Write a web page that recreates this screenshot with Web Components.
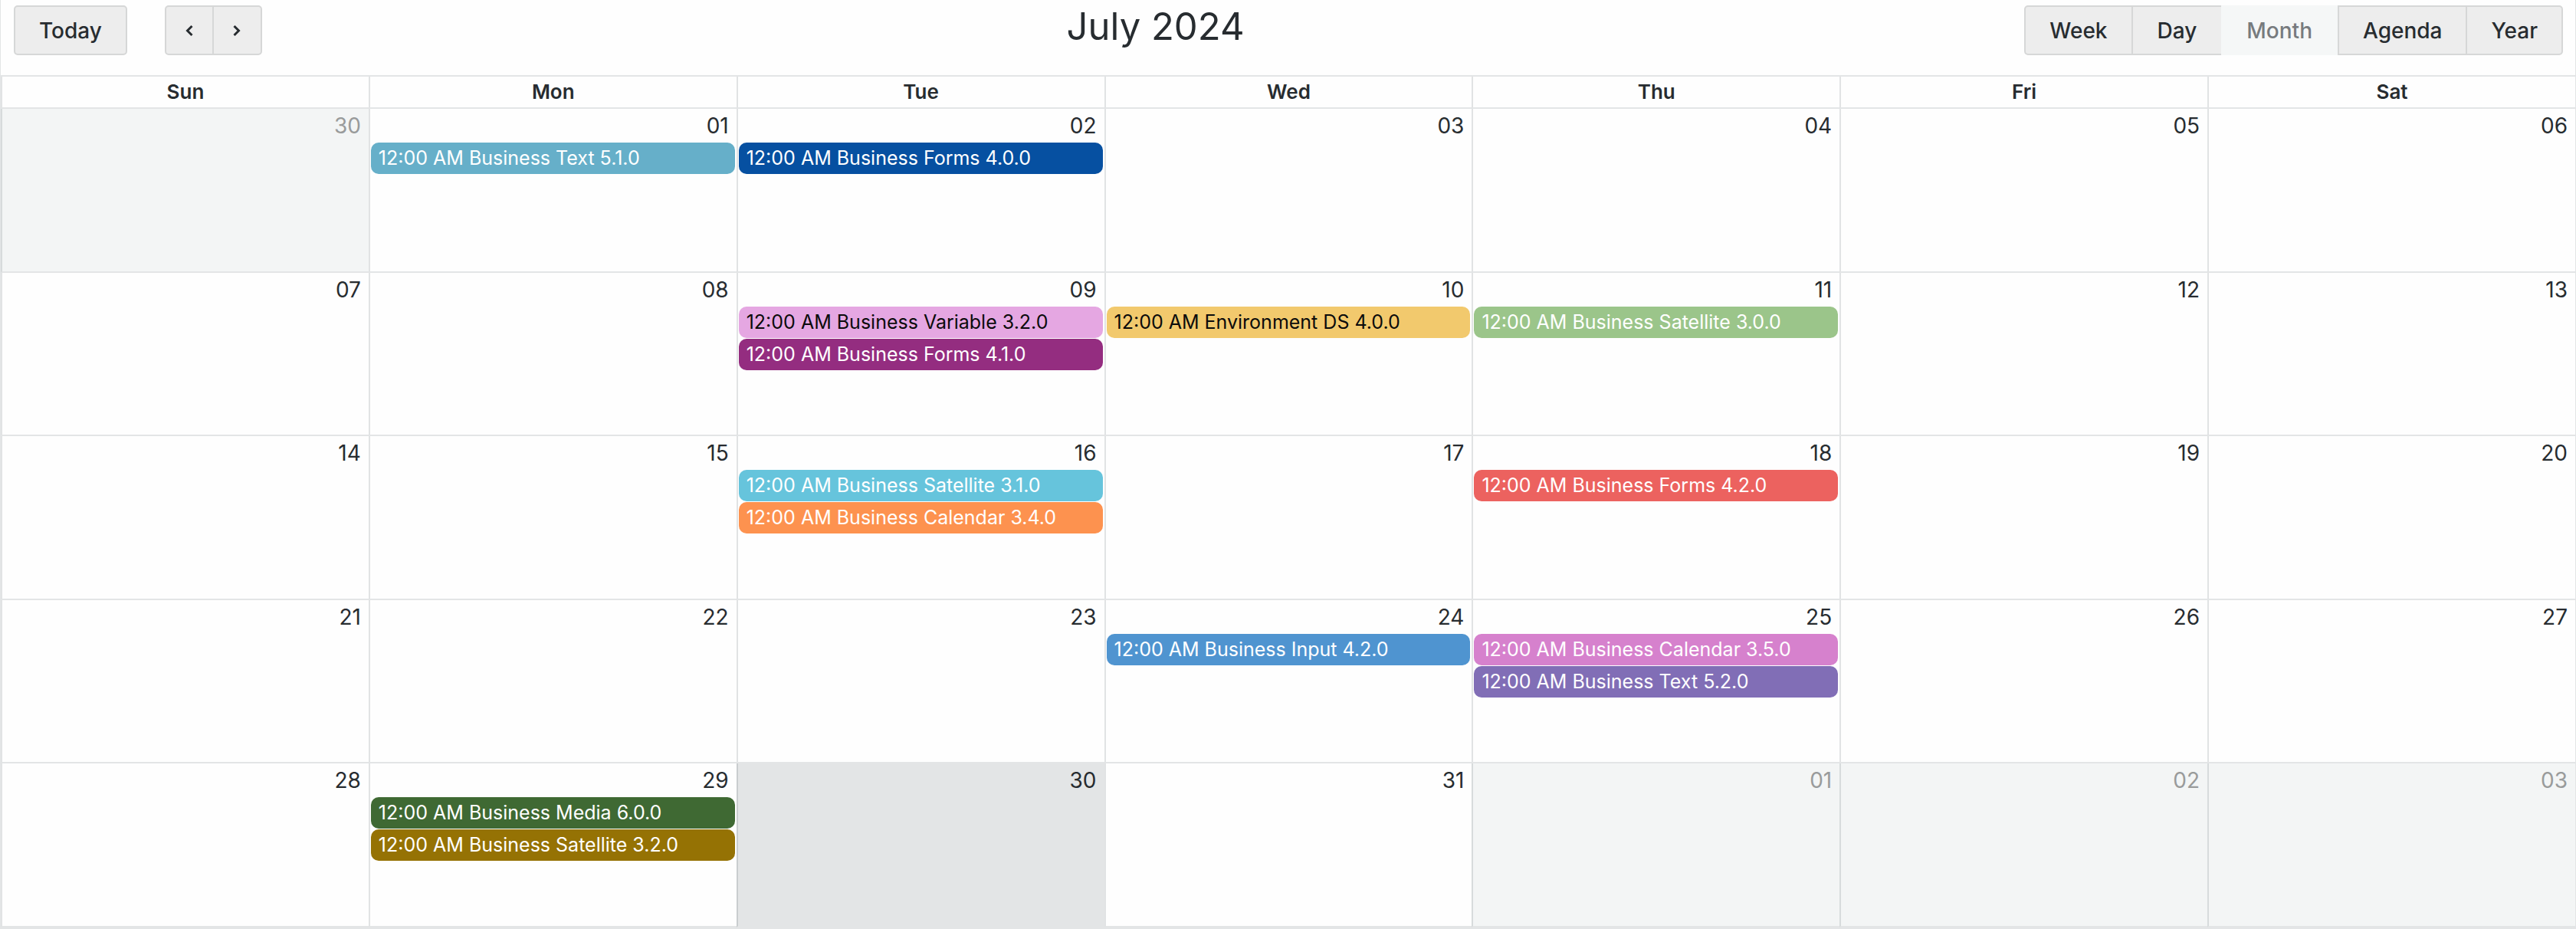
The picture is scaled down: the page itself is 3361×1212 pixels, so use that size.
<!DOCTYPE html>
<html lang="en">
<head>
<meta charset="utf-8">
<title>Calendar</title>
<style>
  body { margin: 0; background: #fefefe; color: #272c30; font-family: Inter, "Liberation Sans", sans-serif; font-size: 28px; }
</style>
</head>
<body>
<release-calendar></release-calendar>

<script>
const define = (name, html, setup) => {
  const template = document.createElement('template');
  template.innerHTML = html;
  customElements.define(name, class extends HTMLElement {
    connectedCallback() {
      if (this.shadowRoot) return;
      this.attachShadow({ mode: 'open' }).append(template.content.cloneNode(true));
      if (setup) setup(this, this.shadowRoot);
    }
  });
};

define('cal-button', `
  <style>
    :host { display: block; }
    button {
      display: flex; align-items: center; justify-content: center;
      box-sizing: border-box; height: 65px; width: 100%; margin: 0; padding: 0 31px;
      font: inherit; font-weight: 500; line-height: 34px; color: inherit;
      background: #ededed; border: 2px solid #d6d7d7;
      border-radius: var(--corners, 5px); cursor: pointer;
    }
    :host([joined]) button { border-left-width: 0; }
    :host([icon]) button { padding: 0; width: 64px; }
    :host([icon][joined]) button { width: 63px; }
    :host([active]) button { background: #f5f7f7; border-color: #f5f7f7; color: #777b7e; }
    :host([before-active]) button { border-right-width: 0; padding: 0 32px; }
  </style>
  <button type="button"><slot></slot></button>`, (host, root) => {
    const button = root.querySelector('button');
    if (host.hasAttribute('label')) button.setAttribute('aria-label', host.getAttribute('label'));
    if (host.hasAttribute('active')) button.setAttribute('aria-pressed', 'true');
  });

define('cal-button-group', `
  <style>
    :host { display: flex; }
    ::slotted(*) { --corners: 0; }
    ::slotted(:first-child) { --corners: 5px 0 0 5px; }
    ::slotted(:last-child) { --corners: 0 5px 5px 0; }
  </style>
  <slot></slot>`);

define('cal-toolbar', `
  <style>
    :host { display: flex; justify-content: space-between; align-items: flex-start; padding: 7px 16px 26px 17px; }
    .navigation { display: flex; gap: 49px; padding-right: 32px; }
    h1 { margin: 0; font-size: 49px; line-height: 56px; font-weight: 400; }
    svg { display: block; }
  </style>
  <div class="navigation">
    <cal-button>Today</cal-button>
    <cal-button-group>
      <cal-button icon label="Previous month">
        <svg width="10" height="16" viewBox="0 0 10 16" fill="none" stroke="#272c30" stroke-width="3"><path d="M8.5 2 2.5 8l6 6"/></svg>
      </cal-button>
      <cal-button icon joined label="Next month">
        <svg width="10" height="16" viewBox="0 0 10 16" fill="none" stroke="#272c30" stroke-width="3"><path d="m1.5 2 6 6-6 6"/></svg>
      </cal-button>
    </cal-button-group>
  </div>
  <h1><slot></slot></h1>
  <cal-button-group>
    <cal-button>Week</cal-button>
    <cal-button joined before-active>Day</cal-button>
    <cal-button active>Month</cal-button>
    <cal-button>Agenda</cal-button>
    <cal-button joined>Year</cal-button>
  </cal-button-group>`);

define('cal-event', `
  <style>
    :host {
      display: block; box-sizing: border-box; height: 41px; padding: 0 10px;
      font-size: 25px; line-height: 41px; white-space: nowrap; overflow: hidden; text-overflow: ellipsis;
      color: #fff; border-radius: 10px;
    }
    :host([dark-text]) { color: #0b0b0b; }
  </style>
  <slot></slot>`, host => { host.style.background = host.getAttribute('color'); });

define('cal-day', `
  <style>
    :host { display: flex; flex-direction: column; gap: 1px; padding: 0 2px 0 1px; }
    time { padding: 4px 8px 2px 0; line-height: 37px; text-align: right; }
  </style>
  <time></time>
  <slot></slot>`, (host, root) => {
    const time = root.querySelector('time');
    time.textContent = host.getAttribute('date').slice(-2);
    time.dateTime = host.getAttribute('date');
  });

const events = {
  '2024-07-01': [['Business Text 5.1.0', '#66afc9']],
  '2024-07-02': [['Business Forms 4.0.0', '#0650a1']],
  '2024-07-09': [['Business Variable 3.2.0', '#e5a7e2', true], ['Business Forms 4.1.0', '#942d80']],
  '2024-07-10': [['Environment DS 4.0.0', '#f2c96d', true]],
  '2024-07-11': [['Business Satellite 3.0.0', '#9bc58a']],
  '2024-07-16': [['Business Satellite 3.1.0', '#66c4dc'], ['Business Calendar 3.4.0', '#fd924f']],
  '2024-07-18': [['Business Forms 4.2.0', '#ec625f']],
  '2024-07-24': [['Business Input 4.2.0', '#4f94d0']],
  '2024-07-25': [['Business Calendar 3.5.0', '#d681cd'], ['Business Text 5.2.0', '#816eb6']],
  '2024-07-29': [['Business Media 6.0.0', '#3f6933'], ['Business Satellite 3.2.0', '#957204']]
};

define('cal-month', `
  <style>
    :host { display: grid; }
    table { width: 100%; table-layout: fixed; border-collapse: separate; border-spacing: 0; border-top: 2px solid #e3e5e6; }
    th, td { box-sizing: border-box; padding: 0; border-left: 2px solid rgba(20, 32, 38, .12); border-bottom: 2px solid #e3e5e6; }
    th { height: 42px; font-size: 26px; line-height: 40px; font-weight: 600; }
    td { height: 213px; vertical-align: top; }
    td.outside { background: #f3f5f5; color: #999b9b; }
    td.today { background: #e3e5e6; }
  </style>
  <table>
    <thead><tr></tr></thead>
    <tbody></tbody>
  </table>`, (host, root) => {
    for (const name of ['Sun', 'Mon', 'Tue', 'Wed', 'Thu', 'Fri', 'Sat']) {
      const th = document.createElement('th');
      th.scope = 'col';
      th.textContent = name;
      root.querySelector('thead tr').append(th);
    }
    const body = root.querySelector('tbody');
    for (let week = 0; week < 5; week++) {
      const row = body.insertRow();
      for (let day = 0; day < 7; day++) {
        const date = new Date(Date.UTC(2024, 5, 30 + week * 7 + day));
        const key = date.toISOString().slice(0, 10);
        const cell = row.insertCell();
        if (date.getUTCMonth() !== 6) cell.className = 'outside';
        if (key === '2024-07-30') cell.className = 'today';
        const box = document.createElement('cal-day');
        box.setAttribute('date', key);
        for (const [title, color, dark] of events[key] || []) {
          const event = document.createElement('cal-event');
          event.setAttribute('color', color);
          event.toggleAttribute('dark-text', !!dark);
          event.textContent = '12:00 AM ' + title;
          box.append(event);
        }
        cell.append(box);
      }
    }
  });

define('release-calendar', `
  <style>
    :host {
      display: grid; grid-template-rows: auto 1fr; box-sizing: border-box; min-height: 100vh;
      border: solid #e3e5e6; border-width: 0 1px 2px;
    }
  </style>
  <cal-toolbar>July 2024</cal-toolbar>
  <cal-month></cal-month>`);
</script>
</body>
</html>
